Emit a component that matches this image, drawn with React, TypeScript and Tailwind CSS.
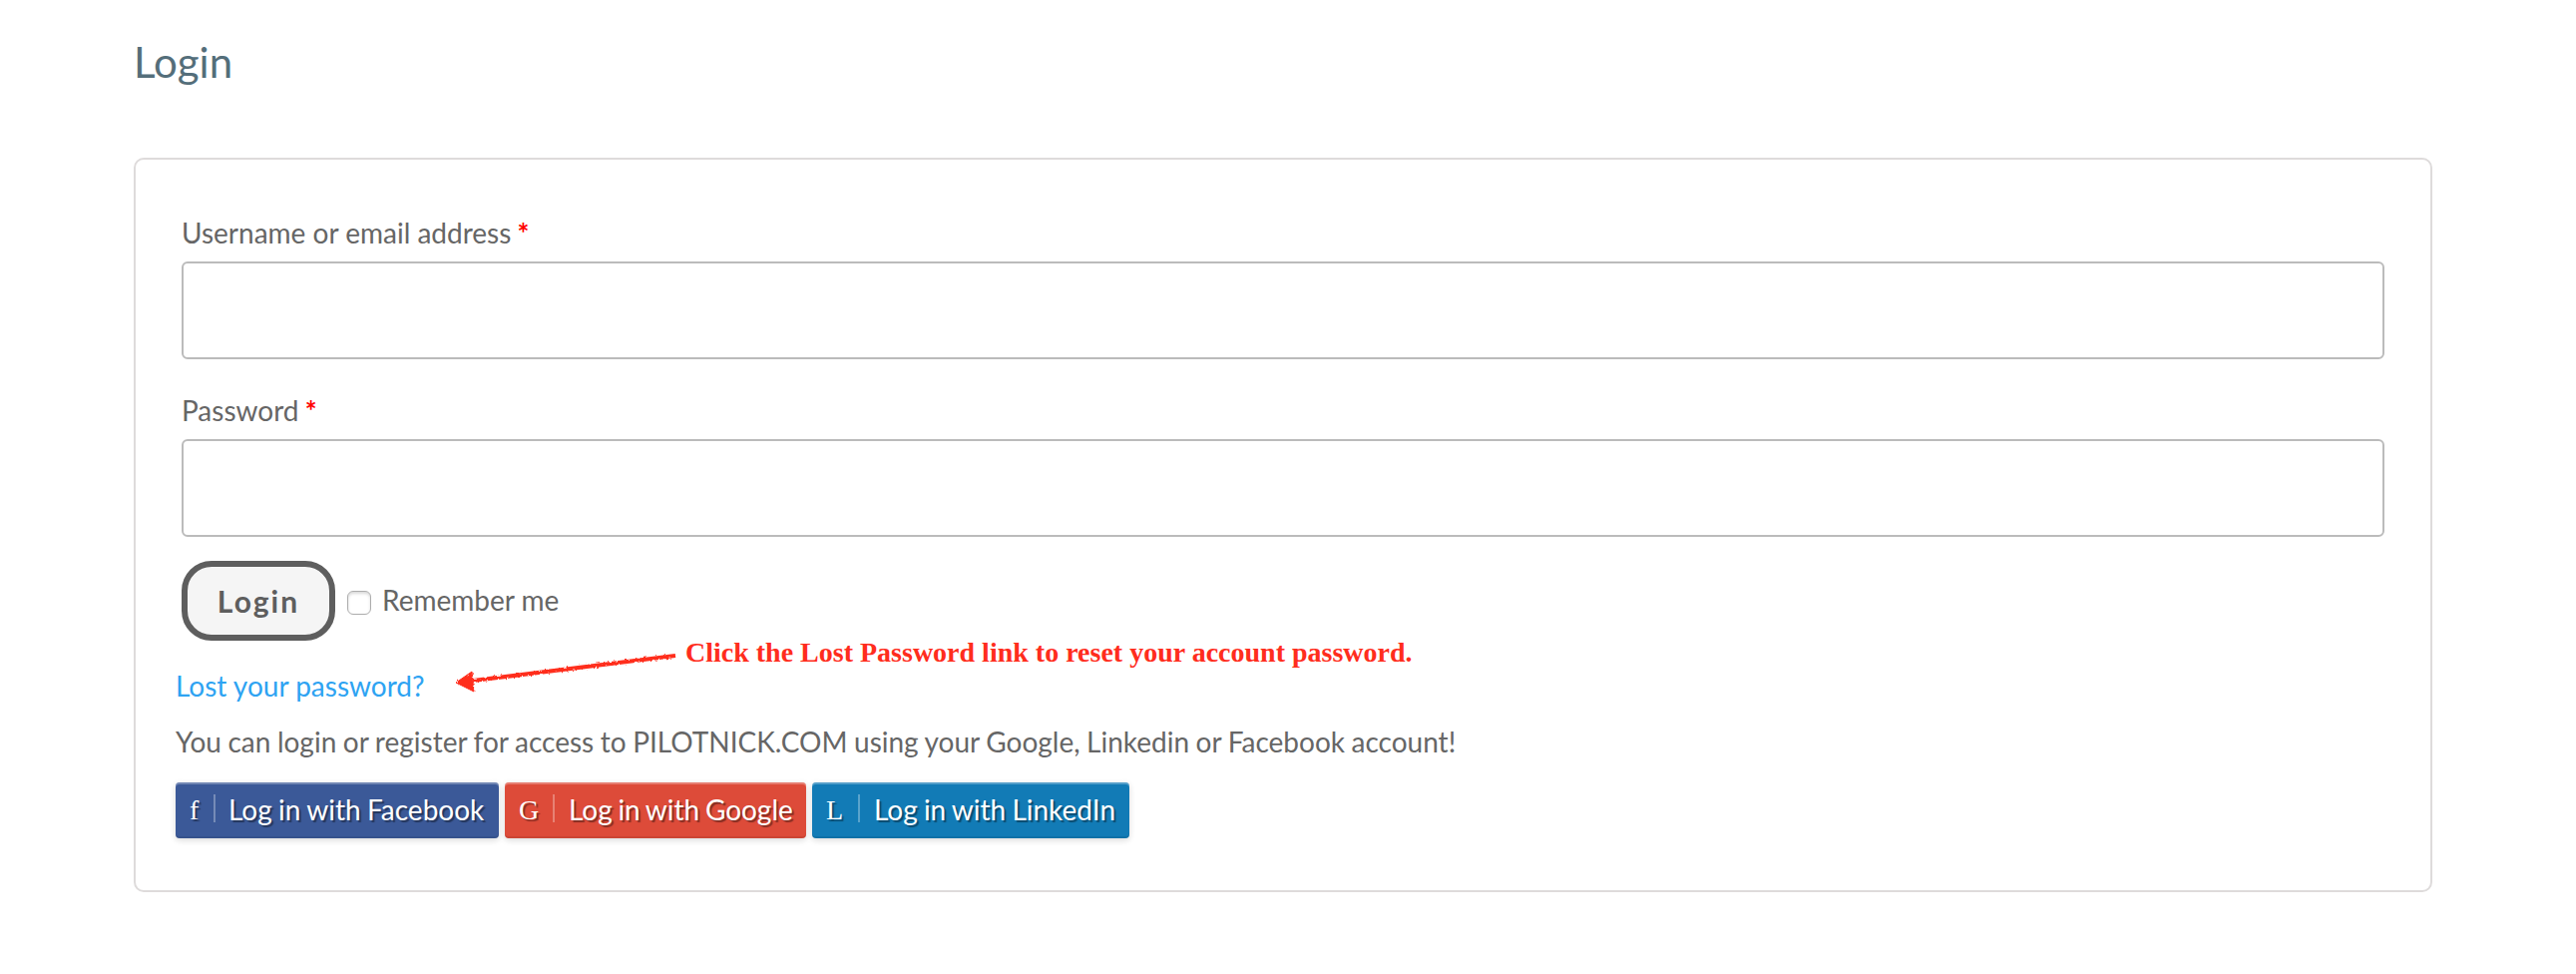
import React from 'react';
import { useState } from 'react';

interface FieldProps{
    label: string;
    name: string;
    type: string;
}

const Field: React.FC<FieldProps> = ({label, name, type}) =>
{
    return (
        <div className="flex flex-col">
            <label htmlFor={name} className="h-14 mb-0.5 leading-[58px]">
                {label} <span className="-ml-px font-bold text-[#ff0000]">*</span>
            </label>
            <input
            id={name}
            name={name}
            type={type}
            className="h-[98px] w-full rounded-md border-2 border-[#bbbbbb] bg-white px-6 outline-none"/>
        </div>
    );
}

const providers = [
    { letter: 'f', name: 'Facebook', style: 'w-[324px] bg-[#3b5998]', letterStyle: 'w-[38px]', textStyle: 'ml-[13px] [word-spacing:-0.8px]' },
    { letter: 'G', name: 'Google', style: 'w-[302px] bg-[#dd4b39]', letterStyle: 'w-[48px]', textStyle: 'ml-3.5 [word-spacing:-1.5px]' },
    { letter: 'L', name: 'LinkedIn', style: 'w-[318px] bg-[#127bb6]', letterStyle: 'w-[46px]', textStyle: 'ml-3.5 [word-spacing:-1px]' },
];

const SocialButtons: React.FC = () =>
{
    return (
        <div className="mt-[13px] flex gap-1.5">
            {providers.map((p) => (
                <button
                key={p.name}
                className={`${p.style} flex h-14 items-center rounded-[4px] text-white whitespace-nowrap [text-shadow:2px_2px_1px_rgba(0,0,0,0.4)] shadow-[inset_0_2px_0_rgba(255,255,255,0.28),inset_0_-2px_0_rgba(0,0,0,0.08),0_2px_6px_rgba(0,0,0,0.15)]`}>
                    <span className={`${p.letterStyle} pl-3.5 text-left font-["Liberation_Serif",serif]`}>{p.letter}</span>
                    <span className="h-7 w-0.5 -mt-1 bg-white/30"></span>
                    <span className={`${p.textStyle} -mt-0.5`}>Log in with {p.name}</span>
                </button>
            ))}
        </div>
    );
}

const Hint: React.FC = () =>
{
    return (
        <div className="absolute left-[318px] top-[480px] flex text-[#ff2d1d]">
            <svg width="230" height="50" viewBox="0 0 230 50" className="overflow-visible">
                <defs>
                    <filter id="rough" x="-5%" y="-20%" width="110%" height="140%">
                        <feTurbulence type="fractalNoise" baseFrequency="0.35" numOctaves="2" seed="4"/>
                        <feDisplacementMap in="SourceGraphic" scale="3"/>
                    </filter>
                </defs>
                <g filter="url(#rough)" fill="currentColor" stroke="currentColor">
                    <path d="M20 42 L223 17" strokeWidth="4.2" fill="none"/>
                    <path d="M3 44 L19 33 L21 53 Z" strokeWidth="1"/>
                </g>
            </svg>
            <p className='ml-[3px] -mt-0.5 font-["Liberation_Serif",serif] text-[28px] font-bold leading-8 whitespace-nowrap'>
                Click the Lost Password link to reset your account password.
            </p>
        </div>
    );
}

const App: React.FC = () =>
{
    const [remember, setRemember] = useState(false);

    return (
        <div className='min-h-screen bg-white px-[134px] pt-[38px] font-["Lato",sans-serif] text-[28px] text-[#666666]'>
            <h2 className="h-[120px] text-[42px] leading-[48px] text-[#546e7a]">Login</h2>
            <div className="relative h-[736px] w-[2304px] rounded-[10px] border-2 border-[#dedbdb]">
                <form className="flex flex-col gap-[22px] px-[46px] pt-[44px]" onSubmit={(e) => e.preventDefault()}>
                    <Field label="Username or email address" name="username" type="text"/>
                    <Field label="Password" name="password" type="password"/>
                    <div className="flex h-20 items-center mt-0.5">
                        <button className="h-20 w-[154px] rounded-[30px] border-[6px] border-[#5e5e5e] bg-[#f5f5f5] text-[30px] font-bold tracking-[2px] text-[#5e5e5e]">
                            Login
                        </button>
                        <label className="ml-3 flex items-center">
                            <input
                            type="checkbox"
                            checked={remember}
                            onChange={() => { setRemember(!remember); }}
                            className="mt-1 h-6 w-6 appearance-none rounded-md border border-[#adadad] bg-white checked:bg-[#39a5f3] shadow-[inset_0_2px_3px_rgba(0,0,0,0.15)]"/>
                            <span className="ml-[11px] -mt-0.5">Remember me</span>
                        </label>
                    </div>
                </form>
                <div className="pl-10 pt-[17px]">
                    <p className="leading-[56px]"><a href="#" className="text-[#2ea3f2]">Lost your password?</a></p>
                    <p className="leading-[56px] [word-spacing:-0.6px]">
                        You can login or register for access to PILOTNICK.COM using your Google, Linkedin or Facebook account!
                    </p>
                    <SocialButtons/>
                </div>
                <Hint/>
            </div>
        </div>
    );
}
export default App;
